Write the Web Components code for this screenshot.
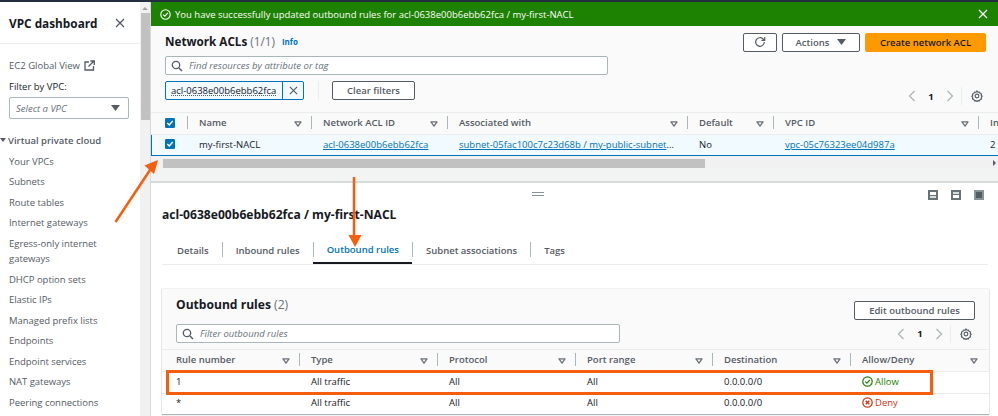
<!DOCTYPE html>
<html>
<head>
<meta charset="utf-8">
<style>
  html, body { margin: 0; height: 416px; overflow: hidden; background: #fff; }
  body { font-family: "Open Sans", "Liberation Sans", sans-serif; font-size: 9.5px; color: #16191f; }
</style>
</head>
<body>
<vpc-console></vpc-console>

<script>
const sortIcon = `<svg width="8" height="6" viewBox="0 0 9 7"><path d="M1 1h7L4.5 6z" fill="none" stroke="#687078" stroke-width="1.5" stroke-linejoin="round"/></svg>`
const searchIcon = `<svg width="12" height="12" viewBox="0 0 12 12"><circle cx="5" cy="5" r="3.7" fill="none" stroke="#545b64" stroke-width="1.3"/><path d="M8 8l3 3" stroke="#545b64" stroke-width="1.5"/></svg>`
const checkIcon = `<svg width="10" height="10" viewBox="0 0 11 11"><rect width="11" height="11" rx="1.5" fill="#0073bb"/><path d="M2.5 5.5l2.2 2.2 3.8-4.4" fill="none" stroke="#fff" stroke-width="1.6"/></svg>`
const gearIcon = `<svg width="12" height="12" viewBox="0 0 13 13"><path d="M6.5 1l1 1.4 1.7-.3.6 1.6 1.600.6-.3 1.700 1 .8-1 1.200.3 1.600-1.600.6-.6 1.600-1.700-.3-1 1-1-1-1.700.3-.6-1.600-1.600-.6.3-1.600-1-1.200 1-.8-.3-1.700 1.600-.6.600-1.600 1.700.3z" fill="none" stroke="#545b64" stroke-width="1.2" stroke-linejoin="round"/><circle cx="6.5" cy="6.5" r="2" fill="none" stroke="#545b64" stroke-width="1.2"/></svg>`
const closeIcon = (color, size) => `<svg width="${size}" height="${size}" viewBox="0 0 10 10"><path d="M1 1l8 8M9 1l-8 8" stroke="${color}" stroke-width="1.3"/></svg>`
const caretIcon = `<svg width="9" height="6" viewBox="0 0 9 6"><path d="M0 0h9L4.5 6z" fill="#545b64"/></svg>`

class PagerControls extends HTMLElement {
  constructor () {
    super()
    this.attachShadow({ mode: 'open' }).innerHTML = `
      <style>
        :host { display: flex; align-items: center; height: 20px; font-size: 9.5px; font-weight: 700; color: #16191f; }
        span { width: 30px; text-align: center; }
        .sep { width: 1px; height: 18px; background: #eaeded; margin: 0 9px 0 7px; }
        svg { display: block; }
      </style>
      <svg width="8" height="12" viewBox="0 0 8 12"><path d="M6.5 1L1.5 6l5 5" fill="none" stroke="#aab7b8" stroke-width="1.3"/></svg>
      <span>1</span>
      <svg width="8" height="12" viewBox="0 0 8 12"><path d="M1.5 1l5 5-5 5" fill="none" stroke="#aab7b8" stroke-width="1.3"/></svg>
      <div class="sep"></div>
      ${gearIcon}
    `
  }
}

class AwsButton extends HTMLElement {
  constructor () {
    super()
    this.attachShadow({ mode: 'open' }).innerHTML = `
      <style>
        :host {
          display: inline-flex; align-items: center; justify-content: center; gap: 8px;
          box-sizing: border-box; height: 19px; padding-bottom: 1px; background: #fff; border: 1px solid #545b64;
          border-radius: 2px; font-size: 9.5px; font-weight: 600; color: #545b64;
        }
        :host([primary]) { background: #ff9900; border-color: #ff9900; color: #16191f; }
      </style>
      <slot></slot>
    `
  }
}

class SearchBox extends HTMLElement {
  constructor () {
    super()
    this.attachShadow({ mode: 'open' }).innerHTML = `
      <style>
        :host {
          display: flex; align-items: center; gap: 6px; box-sizing: border-box; height: 19px;
          padding-left: 5px; background: #fff; border: 1px solid #aab7b8; border-radius: 2px;
          font-size: 9.5px; font-style: italic; color: #687078;
        }
        svg { flex: none; }
      </style>
      ${searchIcon}<slot></slot>
    `
  }
}

class DataTable extends HTMLElement {
  render (cols, rows) {
    const template = cols.map(c => c.w + 'px').join(' ')
    const head = cols.map(c => `
      <div class="th ${c.nosep ? 'nosep' : ''}" style="padding-left:${c.pad || 11}px">
        <span class="label">${c.check ? checkIcon : c.t}</span>
        ${c.t ? sortIcon : ''}
        ${c.nosep ? '' : '<i></i>'}
      </div>`).join('')
    const body = rows.map(r => `
      <div class="row ${r.selected ? 'selected' : ''}" style="grid-template-columns:${template}">
        ${r.cells.map((c, i) => `<div class="td" style="padding-left:${cols[i].pad || 11}px">${c}</div>`).join('')}
      </div>`).join('')
    this.attachShadow({ mode: 'open' }).innerHTML = `
      <style>
        :host { display: block; overflow: hidden; font-size: 9.5px; color: #16191f; }
        .head { display: grid; grid-template-columns: ${template}; height: 22px; align-items: center; background: #fafafa; border-top: 1px solid #eaeded; box-sizing: border-box; }
        .th { display: flex; align-items: center; box-sizing: border-box; padding-bottom: 2px; font-weight: 600; color: #545b64; }
        .label { flex: 1; white-space: nowrap; }
        .label svg { display: block; }
        .th > svg { flex: none; margin: 2px 9px 0 0; }
        .th.nosep > svg { margin-right: 11px; }
        .th i { flex: none; width: 1px; height: 13px; background: #aab7b8; }
        .row { display: grid; align-items: center; box-sizing: border-box; height: var(--row-h, 22px); background: #fff; border-top: 1px solid #eaeded; }
        .row.selected { background: #f1faff; box-shadow: inset 1px 0 0 #0073bb, inset 0 -1px 0 #0073bb; }
        .td { padding-right: 13px; padding-bottom: 2px; white-space: nowrap; overflow: hidden; text-overflow: ellipsis; color: #16191f; }
        .selected .td { padding-bottom: 3px; }
        .td svg { display: block; flex: none; }
        a { color: #0073bb; text-decoration: underline; }
        .allow { color: #1d8102; display: flex; align-items: center; gap: 2px; }
        .deny { color: #d13212; display: flex; align-items: center; gap: 2px; }
      </style>
      <div class="head">${head}</div>
      ${body}
    `
    this.shadowRoot.querySelectorAll('[data-check]').forEach(n => { n.innerHTML = checkIcon })
    this.shadowRoot.querySelectorAll('[data-allow]').forEach(n => {
      n.insertAdjacentHTML('afterbegin', `<svg width="11" height="11" viewBox="0 0 11 11"><circle cx="5.5" cy="5.5" r="4.7" fill="none" stroke="#1d8102" stroke-width="1.2"/><path d="M3.2 5.6l1.6 1.6 3-3.2" fill="none" stroke="#1d8102" stroke-width="1.2"/></svg>`)
    })
    this.shadowRoot.querySelectorAll('[data-deny]').forEach(n => {
      n.insertAdjacentHTML('afterbegin', `<svg width="11" height="11" viewBox="0 0 11 11"><circle cx="5.5" cy="5.5" r="4.7" fill="none" stroke="#d13212" stroke-width="1.2"/><path d="M3.7 3.7l3.6 3.6M7.3 3.7l-3.6 3.6" stroke="#d13212" stroke-width="1.4"/></svg>`)
    })
  }
}

class SideNav extends HTMLElement {
  constructor () {
    super()
    const items = ['Your VPCs', 'Subnets', 'Route tables', 'Internet gateways', 'Egress-only internet gateways', 'DHCP option sets', 'Elastic IPs', 'Managed prefix lists', 'Endpoints', 'Endpoint services', 'NAT gateways', 'Peering connections']
    this.attachShadow({ mode: 'open' }).innerHTML = `
      <style>
        :host { display: block; flex: none; width: 140px; height: 414px; overflow: hidden; background: #fff; color: #545b64; font-size: 9.5px; }
        header { display: flex; justify-content: space-between; align-items: center; box-sizing: border-box; height: 42px; padding: 0 15px 0 9px; border-bottom: 1px solid #eaeded; }
        h2 { margin: 0; font-size: 11.8px; font-weight: 700; color: #16191f; }
        .global { display: flex; align-items: center; gap: 4px; margin: 15px 0 0 9px; line-height: 13px; }
        .filter { margin: 8px 0 0 9px; line-height: 13px; color: #16191f; }
        .select { display: flex; justify-content: space-between; align-items: center; box-sizing: border-box; width: 120px; height: 22px; margin: 4px 0 0 9px; padding: 0 8px 0 6px; border: 1px solid #aab7b8; border-radius: 2px; font-style: italic; color: #687078; }
        .group { margin: 15px 0 0 8px; font-weight: 600; color: #545b64; line-height: 13px; white-space: nowrap; }
        .group::before { content: ""; display: inline-block; border: 3px solid transparent; border-top: 4px solid #545b64; border-bottom: 0; margin: 0 2px 2px -8px; }
        ul { list-style: none; margin: 0; padding: 6.5px 9px 0; }
        li { line-height: 15.5px; padding-bottom: 5px; width: 112px; letter-spacing: -.03px; }
      </style>
      <header>
        <h2>VPC dashboard</h2>
        ${closeIcon('#545b64', 10)}
      </header>
      <div class="global">EC2 Global View
        <svg width="11" height="11" viewBox="0 0 11 11"><path d="M9.5 6v4H1V2h4" fill="none" stroke="#545b64" stroke-width="1.3"/><path d="M4.5 6.5L9.7 1.3M6.3 1h4v4" fill="none" stroke="#545b64" stroke-width="1.3"/></svg>
      </div>
      <div class="filter">Filter by VPC:</div>
      <div class="select"><span>Select a VPC</span>${caretIcon}</div>
      <div class="group">Virtual private cloud</div>
      <ul>${items.map(i => `<li>${i}</li>`).join('')}</ul>
    `
  }
}

class SideScroll extends HTMLElement {
  constructor () {
    super()
    this.attachShadow({ mode: 'open' }).innerHTML = `
      <style>
        :host { display: flex; flex-direction: column; align-items: center; flex: none; width: 10px; height: 414px; background: #f1f1f1; border-right: 1px solid #d5dbdb; }
        .up { width: 0; height: 0; margin: 5px 0 3px; border: 3px solid transparent; border-top: 0; border-bottom: 3px solid #a3a3a3; }
        .thumb { width: 9px; height: 107px; background: #c1c1c1; }
      </style>
      <div class="up"></div>
      <div class="thumb"></div>
    `
  }
}

class FlashBar extends HTMLElement {
  constructor () {
    super()
    this.attachShadow({ mode: 'open' }).innerHTML = `
      <style>
        :host { display: flex; align-items: center; gap: 4px; box-sizing: border-box; height: 24px; padding: 0 10px 0 9px; background: #1d8102; color: #fff; font-size: 9.5px; }
        span { flex: 1; }
      </style>
      <svg width="11" height="11" viewBox="0 0 11 11"><circle cx="5.5" cy="5.5" r="4.7" fill="none" stroke="#fff" stroke-width="1.1"/><path d="M3.2 5.6l1.6 1.6 3-3.2" fill="none" stroke="#fff" stroke-width="1.1"/></svg>
      <span><slot></slot></span>
      ${closeIcon('#fff', 10)}
    `
  }
}

class AclList extends HTMLElement {
  constructor () {
    super()
    this.attachShadow({ mode: 'open' }).innerHTML = `
      <style>
        :host { display: block; height: 157px; box-sizing: border-box; background: #fafafa; border-bottom: 2px solid #d5dbdb; overflow: hidden; }
        .top { display: flex; align-items: flex-start; justify-content: space-between; height: 30px; padding: 7px 12px 0 14px; box-sizing: border-box; }
        h1 { margin: 0; font-size: 11.7px; line-height: 17px; font-weight: 700; color: #16191f; }
        h1 small { font-size: 11.7px; font-weight: 400; color: #687078; }
        h1 em { font-style: normal; font-weight: 700; font-size: 8px; color: #0073bb; margin-left: 4px; vertical-align: 1px; }
        .actions { display: flex; gap: 5px; }
        .refresh { width: 34px; }
        .act { width: 78px; }
        .create { width: 121px; }
        aws-search-box { width: 443px; margin-left: 14px; }
        .tokens { display: flex; align-items: flex-start; margin: 6px 0 0 14px; height: 31px; }
        .token { display: flex; align-items: center; box-sizing: border-box; width: 139px; height: 19px; background: #f1faff; border: 1px solid #0073bb; border-radius: 2px; color: #16191f; }
        .token span { flex: 1; padding-left: 5px; text-decoration: underline dotted #545b64; }
        .token b { display: flex; align-items: center; justify-content: center; width: 20px; height: 100%; border-left: 1px solid #0073bb; }
        .vsep { width: 1px; height: 19px; background: #eaeded; margin: 0 13px 0 14px; }
        .clear { width: 83px; }
        aws-pager { margin: 5px 15px 0 auto; }
        .hbar { display: flex; align-items: flex-end; justify-content: space-between; height: 12px; background: #f1f1f1; padding-left: 12px; }
        .hthumb { width: 542px; height: 9px; background: #c1c1c1; }
        .harrow { width: 0; height: 0; margin: 0 2px 2px 0; border: 3px solid transparent; border-right: 0; border-left: 3px solid #545b64; }
        .rest { height: 15px; background: #f2f3f3; }
      </style>
      <div class="top">
        <h1>Network ACLs <small>(1/1)</small> <em>Info</em></h1>
        <div class="actions">
          <aws-button class="refresh"><svg width="12" height="12" viewBox="0 0 12 12"><path d="M10.3 6a4.3 4.3 0 1 1-1.3-3.1L10.5 4.300M10.7 1v3.300H7.4" fill="none" stroke="#545b64" stroke-width="1.2"/></svg></aws-button>
          <aws-button class="act">Actions ${caretIcon}</aws-button>
          <aws-button class="create" primary>Create network ACL</aws-button>
        </div>
      </div>
      <aws-search-box>Find resources by attribute or tag</aws-search-box>
      <div class="tokens">
        <div class="token"><span>acl-0638e00b6ebb62fca</span><b>${closeIcon('#545b64', 9)}</b></div>
        <div class="vsep"></div>
        <aws-button class="clear">Clear filters</aws-button>
        <aws-pager></aws-pager>
      </div>
      <aws-data-table id="t"></aws-data-table>
      <div class="hbar"><div class="hthumb"></div><div class="harrow"></div></div>
      <div class="rest"></div>
    `
    this.shadowRoot.getElementById('t').render([
      { t: '', w: 37, pad: 14, check: true }, { t: 'Name', w: 124 }, { t: 'Network ACL ID', w: 136 },
      { t: 'Associated with', w: 240 }, { t: 'Default', w: 86 }, { t: 'VPC ID', w: 205 }, { t: 'In', w: 19, nosep: true }
    ], [{
      selected: true,
      cells: [
        '<div data-check></div>', 'my-first-NACL',
        '<a>acl-0638e00b6ebb62fca</a>',
        '<a>subnet-05fac100c7c23d68b / my-public-subnet-1a</a>',
        'No', '<a>vpc-05c76323ee04d987a</a>', '2'
      ]
    }])
  }
}

class DetailPanel extends HTMLElement {
  constructor () {
    super()
    this.attachShadow({ mode: 'open' }).innerHTML = `
      <style>
        :host { display: block; position: relative; height: 233px; background: #fff; overflow: hidden; }
        .tools { display: flex; justify-content: flex-end; gap: 13px; height: 18px; padding: 7px 14px 0 0; box-sizing: border-box; }
        .tools svg { display: block; }
        .handle { position: absolute; left: 381px; top: 9px; width: 12px; height: 2px; border-top: 1px solid #879596; border-bottom: 1px solid #879596; }
        h2 { margin: 5px 0 0 11px; font-size: 12.1px; line-height: 18px; font-weight: 700; color: #16191f; }
        nav { display: flex; height: 29px; margin: 11px 10px 0 11px; border-bottom: 1px solid #eaeded; font-weight: 600; font-size: 9.5px; color: #545b64; }
        nav div { display: flex; align-items: center; padding: 2px 13px 0 14px; height: 100%; box-sizing: border-box; position: relative; }
        nav div:first-child { padding-left: 15px; }
        nav div + div::before { content: ""; position: absolute; left: 0; top: 7px; height: 15px; width: 1px; background: #aab7b8; }
        nav .on { color: #0073bb; border-bottom: 2px solid #16191f; }
        section { margin: 24px 9px 0 11px; height: 125px; background: #fafafa; box-shadow: 0 0 1px #aab7b8, 0 1px 1px #aab7b8; }
        .ch { display: flex; justify-content: space-between; align-items: flex-start; padding: 7px 14px 0; height: 35px; box-sizing: border-box; }
        h3 { margin: 0; font-size: 12.1px; line-height: 17px; font-weight: 700; color: #16191f; }
        h3 small { font-size: 12.1px; font-weight: 400; color: #687078; }
        .edit { width: 121px; margin-top: 5px; }
        .filter { display: flex; justify-content: space-between; align-items: center; height: 19px; padding: 0 17px 0 14px; }
        aws-search-box { width: 444px; }
        aws-data-table { margin-top: 6px; height: 65px; --row-h: 21.5px; }
      </style>
      <div class="handle"></div>
      <div class="tools">
        <svg width="10" height="10" viewBox="0 0 10 10"><rect width="10" height="10" fill="#687078"/><rect x="2" y="2" width="6" height="3" fill="#fff"/><rect x="2" y="6" width="6" height="2" fill="#d5dbdb"/></svg>
        <svg width="10" height="10" viewBox="0 0 10 10"><rect width="10" height="10" fill="#687078"/><rect x="2" y="2" width="6" height="2" fill="#d5dbdb"/><rect x="2" y="5" width="6" height="3" fill="#fff"/></svg>
        <svg width="10" height="10" viewBox="0 0 10 10"><rect width="10" height="10" fill="#879596"/><rect x="2" y="2" width="6" height="6" fill="#545b64"/></svg>
      </div>
      <h2>acl-0638e00b6ebb62fca / my-first-NACL</h2>
      <nav>
        <div>Details</div><div>Inbound rules</div><div class="on">Outbound rules</div><div>Subnet associations</div><div>Tags</div>
      </nav>
      <section>
        <div class="ch">
          <h3>Outbound rules <small>(2)</small></h3>
          <aws-button class="edit">Edit outbound rules</aws-button>
        </div>
        <div class="filter">
          <aws-search-box>Filter outbound rules</aws-search-box>
          <aws-pager></aws-pager>
        </div>
        <aws-data-table id="r"></aws-data-table>
      </section>
    `
    this.shadowRoot.getElementById('r').render([
      { t: 'Rule number', w: 138, pad: 14 }, { t: 'Type', w: 138 }, { t: 'Protocol', w: 138 },
      { t: 'Port range', w: 137 }, { t: 'Destination', w: 138 }, { t: 'Allow/Deny', w: 138, nosep: true }
    ], [
      { cells: ['1', 'All traffic', 'All', 'All', '0.0.0.0/0', '<div class="allow" data-allow>Allow</div>'] },
      { cells: ['*', 'All traffic', 'All', 'All', '0.0.0.0/0', '<div class="deny" data-deny>Deny</div>'] }
    ])
  }
}

class MarkupLayer extends HTMLElement {
  constructor () {
    super()
    // hand drawn arrows and the box round rule 1, they sit on top of the page
    this.attachShadow({ mode: 'open' }).innerHTML = `
      <style>
        :host { position: absolute; left: 0; top: 0; width: 998px; height: 416px; pointer-events: none; }
        svg { display: block; }
      </style>
      <svg width="998" height="416" viewBox="0 0 998 416">
        <path d="M115.5 220L150 168" stroke="#f55d0f" stroke-width="2.5" fill="none"/>
        <path d="M158 158l-13.5 5.5 9.5 8.500z" fill="#f55d0f"/>
        <path d="M354 175V235" stroke="#f55d0f" stroke-width="2.5" fill="none"/>
        <path d="M355 245l-6.500-12h13z" fill="#f55d0f"/>
        <rect x="167.5" y="369.5" width="764" height="22" fill="none" stroke="#f55d0f" stroke-width="3"/>
      </svg>
    `
  }
}

class VpcConsole extends HTMLElement {
  constructor () {
    super()
    this.attachShadow({ mode: 'open' }).innerHTML = `
      <style>
        :host { display: block; position: relative; width: 998px; height: 416px; overflow: hidden; border-top: 2px solid #232f3e; box-sizing: border-box; }
        .shell { display: flex; height: 414px; }
        main { flex: 1; min-width: 0; display: flex; flex-direction: column; }
      </style>
      <div class="shell">
        <side-nav></side-nav>
        <side-scroll></side-scroll>
        <main>
          <flash-bar>You have successfully updated outbound rules for acl-0638e00b6ebb62fca / my-first-NACL</flash-bar>
          <acl-list></acl-list>
          <detail-panel></detail-panel>
        </main>
      </div>
      <markup-layer></markup-layer>
    `
  }
}

customElements.define('aws-pager', PagerControls)
customElements.define('aws-button', AwsButton)
customElements.define('aws-search-box', SearchBox)
customElements.define('aws-data-table', DataTable)
customElements.define('side-nav', SideNav)
customElements.define('side-scroll', SideScroll)
customElements.define('flash-bar', FlashBar)
customElements.define('acl-list', AclList)
customElements.define('detail-panel', DetailPanel)
customElements.define('markup-layer', MarkupLayer)
customElements.define('vpc-console', VpcConsole)
</script>
</body>
</html>
